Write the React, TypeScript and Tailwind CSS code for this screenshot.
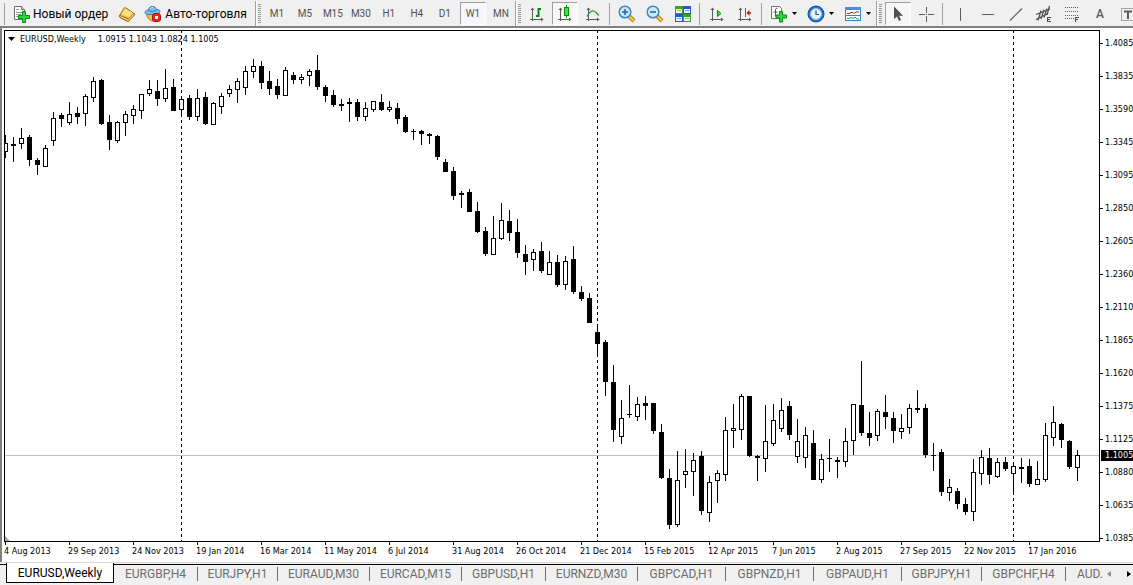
import type { ReactNode } from "react"
import clsx from "clsx"

// [high, body top, body bottom, low, rising] as rows of the chart window
type Candle = [number, number, number, number, 0 | 1]

const PLOT_TOP = 31
const STEP = 8

const candles: Candle[] = [
  [135, 143, 152, 158, 1], [137, 144, 146, 162, 0], [128, 138, 144, 149, 1], [135, 137, 160, 166, 0],
  [158, 160, 165, 175, 0], [145, 148, 167, 167, 1], [112, 118, 141, 146, 1], [113, 115, 119, 127, 0],
  [102, 114, 123, 125, 1], [107, 113, 117, 124, 0], [94, 96, 114, 126, 1], [77, 81, 98, 102, 1],
  [79, 80, 124, 125, 0], [115, 122, 140, 150, 0], [121, 122, 141, 143, 1], [111, 114, 123, 136, 1],
  [105, 109, 116, 124, 1], [94, 94, 111, 119, 1], [80, 89, 94, 96, 1], [80, 91, 99, 106, 0],
  [69, 88, 99, 102, 1], [79, 87, 111, 111, 0], [96, 99, 110, 115, 1], [95, 98, 117, 120, 0],
  [89, 98, 117, 121, 1], [92, 97, 124, 125, 0], [102, 103, 125, 125, 1], [93, 96, 107, 114, 1],
  [85, 89, 94, 97, 1], [78, 81, 90, 103, 1], [66, 71, 88, 95, 1], [59, 66, 72, 78, 1],
  [61, 66, 83, 89, 0], [71, 81, 89, 95, 0], [79, 86, 95, 99, 0], [67, 70, 96, 96, 1],
  [72, 75, 80, 84, 0], [74, 77, 80, 84, 1], [69, 71, 76, 86, 1], [55, 70, 87, 90, 0],
  [85, 87, 96, 102, 0], [90, 95, 105, 107, 0], [99, 104, 106, 111, 0], [98, 102, 104, 122, 0],
  [99, 102, 117, 121, 0], [102, 108, 117, 121, 1], [101, 101, 110, 112, 1], [94, 102, 110, 111, 0],
  [101, 107, 110, 112, 1], [103, 108, 119, 124, 0], [115, 117, 132, 133, 0], [129, 131, 132, 140, 0],
  [130, 131, 134, 145, 0], [133, 134, 136, 144, 0], [135, 136, 157, 160, 0], [159, 162, 172, 172, 0],
  [167, 171, 196, 200, 0], [191, 193, 195, 208, 0], [189, 192, 212, 212, 0], [202, 211, 232, 233, 0],
  [227, 231, 254, 256, 0], [216, 238, 255, 255, 1], [203, 220, 239, 240, 1], [210, 221, 233, 241, 0],
  [219, 232, 253, 258, 0], [245, 254, 262, 275, 0], [249, 252, 260, 271, 1], [242, 251, 271, 273, 0],
  [251, 262, 275, 275, 1], [255, 262, 285, 287, 0], [256, 261, 285, 290, 1], [246, 259, 292, 294, 0],
  [286, 292, 299, 301, 0], [293, 298, 323, 323, 0], [324, 332, 344, 356, 0], [340, 342, 382, 396, 0],
  [365, 382, 430, 442, 0], [400, 418, 437, 444, 1], [385, 414, 415, 418, 0], [397, 404, 417, 421, 1],
  [396, 403, 406, 420, 0], [403, 403, 431, 434, 0], [424, 432, 478, 479, 0], [469, 478, 525, 529, 0],
  [451, 480, 525, 527, 1], [449, 471, 475, 488, 1], [453, 460, 472, 496, 1], [451, 456, 511, 515, 0],
  [476, 482, 513, 522, 1], [470, 473, 481, 503, 1], [417, 430, 475, 481, 1], [404, 428, 431, 448, 1],
  [394, 396, 430, 440, 1], [396, 396, 456, 457, 0], [455, 456, 458, 481, 0], [405, 441, 459, 472, 1],
  [404, 420, 444, 446, 1], [398, 410, 429, 432, 1], [401, 406, 435, 440, 0], [419, 441, 457, 463, 1],
  [427, 435, 458, 468, 1], [430, 443, 480, 480, 0], [454, 459, 480, 483, 1], [439, 458, 459, 472, 0],
  [457, 460, 462, 478, 0], [428, 441, 462, 467, 1], [404, 404, 441, 455, 1], [361, 405, 433, 436, 0],
  [412, 433, 438, 446, 0], [409, 411, 436, 441, 1], [395, 412, 417, 429, 0], [412, 418, 431, 443, 0],
  [414, 428, 432, 439, 1], [404, 408, 428, 434, 1], [390, 408, 410, 413, 0], [404, 408, 455, 458, 0],
  [443, 455, 456, 471, 0], [449, 452, 492, 496, 0], [479, 487, 493, 501, 1], [488, 491, 504, 509, 0],
  [498, 504, 512, 515, 0], [459, 472, 512, 521, 1], [450, 457, 474, 485, 1], [448, 458, 475, 484, 0],
  [458, 462, 477, 478, 1], [457, 462, 469, 471, 0], [462, 466, 474, 495, 1], [458, 467, 469, 483, 0],
  [459, 466, 484, 487, 0], [461, 479, 485, 485, 1], [423, 435, 480, 482, 1], [406, 422, 438, 446, 1],
  [423, 424, 440, 448, 0], [440, 441, 467, 469, 0], [450, 455, 468, 481, 1],
]

// candles that open a new year
const yearStarts = [22, 74, 126]

const prices = [
  "1.4085", "1.3835", "1.3590", "1.3345", "1.3095", "1.2850", "1.2605", "1.2360",
  "1.2110", "1.1865", "1.1620", "1.1375", "1.1125", "1.0880", "1.0635", "1.0385",
]

const dates = [
  "4 Aug 2013", "29 Sep 2013", "24 Nov 2013", "19 Jan 2014", "16 Mar 2014", "11 May 2014",
  "6 Jul 2014", "31 Aug 2014", "26 Oct 2014", "21 Dec 2014", "15 Feb 2015", "12 Apr 2015",
  "7 Jun 2015", "2 Aug 2015", "27 Sep 2015", "22 Nov 2015", "17 Jan 2016",
]

const timeframes = ["M1", "M5", "M15", "M30", "H1", "H4", "D1", "W1", "MN"]

const tabs = [
  { name: "EURGBP,H4", width: "w-21" },
  { name: "EURJPY,H1", width: "w-20" },
  { name: "EURAUD,M30", width: "w-23" },
  { name: "EURCAD,M15", width: "w-23" },
  { name: "GBPUSD,H1", width: "w-21" },
  { name: "EURNZD,M30", width: "w-23" },
  { name: "GBPCAD,H1", width: "w-22" },
  { name: "GBPNZD,H1", width: "w-22" },
  { name: "GBPAUD,H1", width: "w-22" },
  { name: "GBPJPY,H1", width: "w-20" },
  { name: "GBPCHF,H4", width: "w-21" },
]

const PRESSED =
  "border border-t-[#a0a0a0] border-l-[#a0a0a0] border-r-white border-b-white bg-[#f7f7f7]"

function Icon({ size = 18, children }: { size?: number; children: ReactNode }) {
  return (
    <svg width={size} height={size} viewBox={`0 0 ${size} ${size}`} className="block shrink-0" aria-hidden="true">
      {children}
    </svg>
  )
}

function ToolButton({ label, active, children }: { label: string; active?: boolean; children: ReactNode }) {
  return (
    <button
      aria-label={label}
      title={label}
      className="flex h-full w-7 shrink-0 items-center justify-center"
    >
      <span className={clsx("flex h-[23px] w-[26px] items-center justify-center", active && PRESSED)}>
        {children}
      </span>
    </button>
  )
}

function MenuButton({ label, children }: { label: string; children: ReactNode }) {
  return (
    <button
      aria-label={label}
      title={label}
      className="flex h-full w-[37px] shrink-0 items-center justify-center gap-1"
    >
      {children}
      <svg width="5" height="3" viewBox="0 0 5 3" aria-hidden="true">
        <path d="M0 0h5L2.5 3z" fill="#000" />
      </svg>
    </button>
  )
}

function Separator() {
  return (
    <span className="flex w-1.5 shrink-0 justify-center">
      <span className="h-[22px] w-px bg-[#a0a0a0]" />
    </span>
  )
}

function SectionStart() {
  return (
    <span className="flex h-full w-2 shrink-0 items-center gap-px">
      <span className="h-full w-0.5 border-l border-l-[#a0a0a0] bg-white" />
      <svg width="3" height="20" viewBox="0 0 3 20" aria-hidden="true">
        <path d="M1.5 0v20" stroke="#9a9a9a" strokeWidth="3" strokeDasharray="1 1" />
      </svg>
    </span>
  )
}

function Axes() {
  return (
    <g stroke="#5c5c5c" fill="#5c5c5c">
      <path d="M4.5 3v13M2 14.5h13" fill="none" />
      <path d="M2.500 5 4.500 2.500 6.500 5zM13 12.500 15.500 14.500 13 16.500z" stroke="none" />
    </g>
  )
}

function NewOrderIcon() {
  return (
    <Icon>
      <path d="M1.500 1.500h7l3 3v10h-10z" fill="#fff" stroke="#707070" />
      <path d="M8.500 1.500v3h3" fill="#ddd" stroke="#707070" />
      <path d="M3 4.500h3M3 7.500h6M3 9.500h5M3 11.500h3" stroke="#9a9a9a" />
      <path d="M9.500 6.500h3v4h4v3h-4v4h-3v-4h-4v-3h4z" fill="#2fd63a" stroke="#0b8a17" />
    </Icon>
  )
}

function BookIcon() {
  return (
    <Icon>
      <path d="M1.500 10.500 6.500 2.500c3 1 6 3.500 9.500 6l-5.500 7z" fill="#f0bf3c" stroke="#a36a0c" />
      <path d="M3.500 9 7 3.500c2.500 1 5.500 3 8 5L11 12.500C8.500 11 6 9.500 3.500 9z" fill="#fbe088" />
      <path d="M1.500 10.500c-.3 1 0 1.700.8 2.200l8 4c.6-.8 5-5.500 6-6.700l-.3-1.500-5.500 5.500z" fill="#d4921c" stroke="#8f5a08" />
      <path d="m2.500 11.500 7.800 3.800 5.200-5.800" fill="none" stroke="#fff3c4" />
    </Icon>
  )
}

function AutoTradeIcon() {
  return (
    <Icon>
      <path d="M3 8c-1 3 2 8 6 8s7-3 6.500-7z" fill="#f1c232" stroke="#a87a10" />
      <path d="M1 7.500c0-1.500 2-2.500 3.500-2.500C5 2.500 6.500 1.500 8.500 1.500s3.500 1 4 3c2 0 3.500.8 3.500 2S13 9.500 8 9.500 1 9 1 7.500z" fill="#7cc0ea" stroke="#2878b0" />
      <path d="M4.500 5.500c2 1.300 6 1.300 8-.5" fill="none" stroke="#2878b0" />
      <path d="M6.500 3.500c.5-.8 1.500-1 2.500-1" fill="none" stroke="#d8f0ff" />
      <rect x="8.500" y="8.500" width="8" height="8" rx="2.500" fill="#e02a18" stroke="#a81408" />
      <rect x="11" y="11" width="3" height="3" fill="#fff" />
    </Icon>
  )
}

function MagnifierIcon({ plus }: { plus?: boolean }) {
  return (
    <Icon>
      <path d="m11 11 5 5" stroke="#a07810" strokeWidth="4" />
      <path d="m11 11 4.600 4.600" stroke="#f4d040" strokeWidth="2.400" />
      <circle cx="7" cy="7" r="5.800" fill="#cdeafa" stroke="#3a88c8" strokeWidth="1.500" />
      <path d="M4 7h6" stroke="#2f78b4" strokeWidth="1.800" />
      {plus && <path d="M7 4v6" stroke="#2f78b4" strokeWidth="1.800" />}
    </Icon>
  )
}

function TileIcon() {
  const cells = [
    { x: 1, y: 1, fill: "#3f9e1c" },
    { x: 9, y: 1, fill: "#2457c8" },
    { x: 1, y: 9, fill: "#2457c8" },
    { x: 9, y: 9, fill: "#3f9e1c" },
  ]
  return (
    <Icon>
      {cells.map((c) => (
        <g key={`${c.x}-${c.y}`} shapeRendering="crispEdges">
          <rect x={c.x} y={c.y} width="8" height="8" fill={c.fill} />
          <rect x={c.x + 1} y={c.y + 3} width="6" height="4" fill="#eef4ff" />
          <rect x={c.x + 2} y={c.y + 4} width="4" height="1" fill={c.fill} opacity=".6" />
        </g>
      ))}
    </Icon>
  )
}

function IndicatorIcon() {
  return (
    <Icon>
      <path d="M1.500 1.500h8l2 2v10h-10z" fill="#fff" stroke="#707070" />
      <path d="M7.500 3.500c-2-.5-2 1-2 2.500v5.500M3.500 7h4" fill="none" stroke="#555" />
      <path d="M9.500 6.500h3v3.500h4v3h-4v4h-3v-4h-3.500v-3h3.500z" fill="#2fd63a" stroke="#0b8a17" />
    </Icon>
  )
}

function ClockIcon() {
  return (
    <Icon>
      <circle cx="9" cy="9" r="8" fill="#2372cc" stroke="#174f98" />
      <circle cx="9" cy="9" r="5.500" fill="#e4f3ff" stroke="#8fc0f0" />
      <path d="M9 5.500V9.500h3" fill="none" stroke="#2a5078" strokeWidth="1.200" />
    </Icon>
  )
}

function TemplateIcon() {
  return (
    <Icon>
      <rect x="1.500" y="2.500" width="15" height="13" fill="#fff" stroke="#3d7dc4" />
      <path d="M1 3.500h16" stroke="#4a8fd8" strokeWidth="3" />
      <path d="M2 10.500h14" stroke="#3d7dc4" />
      <path d="M3 8.500h2l2-1h2l1 1 2-1.500h3" fill="none" stroke="#9a2a10" />
      <path d="M3 13.500h2l2-1 2 1 2-1.500 2 2h2" fill="none" stroke="#2f9a3a" />
    </Icon>
  )
}

function Toolbar() {
  return (
    <header
      role="toolbar"
      className="flex h-[26px] shrink-0 items-center overflow-hidden bg-[#f0f0f0] pt-px text-black"
    >
      <span className="ml-1 mr-2 h-[22px] w-px shrink-0 bg-[#a0a0a0]" />
      <button className="flex shrink-0 items-center gap-0.5 whitespace-nowrap text-xs">
        <NewOrderIcon />
        Новый ордер
      </button>
      <button aria-label="MetaEditor" className="ml-2.5 mr-2 shrink-0">
        <BookIcon />
      </button>
      <button className="mr-2 flex shrink-0 items-center gap-[3px] whitespace-nowrap text-xs">
        <AutoTradeIcon />
        Авто-торговля
      </button>

      <SectionStart />
      {timeframes.map((tf) => (
        <ToolButton key={tf} label={tf} active={tf === "W1"}>
          <span className="text-[10px] text-[#505050]">{tf}</span>
        </ToolButton>
      ))}

      <SectionStart />
      <ToolButton label="Bar Chart">
        <Icon>
          <Axes />
          <path d="M10.500 3v9M8 11h3M10 4h3" stroke="#0a8a14" strokeWidth="2" />
        </Icon>
      </ToolButton>
      <ToolButton label="Candlesticks" active>
        <Icon>
          <Axes />
          <path d="M10.500 0v13" stroke="#0a8a14" />
          <rect x="8.500" y="2.500" width="4" height="8" fill="#3fe04c" stroke="#0a8a14" />
        </Icon>
      </ToolButton>
      <ToolButton label="Line Chart">
        <Icon>
          <Axes />
          <path d="M3 11.500c3-6 6-7 9-4l3 3" fill="none" stroke="#2f9a3a" strokeWidth="1.300" />
        </Icon>
      </ToolButton>
      <Separator />
      <ToolButton label="Zoom In">
        <MagnifierIcon plus />
      </ToolButton>
      <ToolButton label="Zoom Out">
        <MagnifierIcon />
      </ToolButton>
      <ToolButton label="Tile Windows">
        <TileIcon />
      </ToolButton>
      <Separator />
      <ToolButton label="Auto Scroll">
        <Icon>
          <Axes />
          <path d="m9.500 5.500 3.500 3-3.500 3z" fill="#3fe04c" stroke="#0a8a14" />
        </Icon>
      </ToolButton>
      <ToolButton label="Chart Shift">
        <Icon>
          <Axes />
          <path d="M9.500 3v9" stroke="#2a70a8" />
          <path d="M11 8h4" stroke="#a82a10" strokeWidth="1.500" />
          <path d="m10.500 8 3-3v6z" fill="#a82a10" />
        </Icon>
      </ToolButton>
      <Separator />
      <MenuButton label="Indicators">
        <IndicatorIcon />
      </MenuButton>
      <MenuButton label="Periods">
        <ClockIcon />
      </MenuButton>
      <MenuButton label="Templates">
        <TemplateIcon />
      </MenuButton>

      <SectionStart />
      <ToolButton label="Cursor" active>
        <Icon>
          <path d="M5 1.500v12.500l3-2.500 2 4.500 2-1-2-4.200h4z" fill="#4d4d4d" />
        </Icon>
      </ToolButton>
      <ToolButton label="Crosshair">
        <Icon>
          <path d="M9.500 2v6M9.500 11v6M2 9.500h6M11 9.500h6M9 9.500h1" stroke="#5c5c5c" />
        </Icon>
      </ToolButton>
      <Separator />
      <ToolButton label="Vertical Line">
        <Icon>
          <path d="M9.500 3v13" stroke="#5c5c5c" />
        </Icon>
      </ToolButton>
      <ToolButton label="Horizontal Line">
        <Icon>
          <path d="M3 9.500h12" stroke="#5c5c5c" />
        </Icon>
      </ToolButton>
      <ToolButton label="Trendline">
        <Icon>
          <path d="M3 15.500 15 3.500" stroke="#5c5c5c" strokeWidth="1.200" />
        </Icon>
      </ToolButton>
      <ToolButton label="Equidistant Channel">
        <Icon>
          <path d="M1 9.500 15 4M1 14.500 13 8.500M6 5.500l-3 10M9 4.500l-3 9.500M12 3.500l-3 9M14.500 1l-2.500 9" stroke="#4d4d4d" strokeWidth="1.200" />
          <path d="M12.500 12v5M12 12.500h4M12 14.500h3M12 16.500h4" stroke="#4d4d4d" />
        </Icon>
      </ToolButton>
      <ToolButton label="Fibonacci Retracement">
        <Icon>
          <path d="M2 2.500h13M2 6.500h13M2 10.500h13M2 13.500h9" stroke="#5c5c5c" strokeDasharray="1 1" />
          <path d="M12.500 12v5M12 12.500h4M12 14.500h3" stroke="#4d4d4d" />
        </Icon>
      </ToolButton>
      <ToolButton label="Text">
        <span className="text-xs font-medium text-[#5c5c5c]">A</span>
      </ToolButton>
      <ToolButton label="Text Label">
        <Icon>
          <rect x="2.500" y="3.500" width="13" height="12" fill="none" stroke="#5c5c5c" strokeDasharray="1 1" />
          <path d="M5 6.500h8M9 6v8" stroke="#5c5c5c" strokeWidth="2" />
        </Icon>
      </ToolButton>
    </header>
  )
}

function CandleShape({ index, candle }: { index: number; candle: Candle }) {
  const [high, top, bottom, low, rising] = candle
  const x = index * STEP
  return (
    <g>
      <rect x={x} y={high - PLOT_TOP} width={1} height={low - high} />
      <rect x={x - 2} y={top - PLOT_TOP} width={5} height={bottom - top} />
      {rising === 1 && (
        <rect x={x - 1} y={top - PLOT_TOP + 1} width={3} height={bottom - top - 2} fill="#fff" />
      )}
    </g>
  )
}

function Plot() {
  return (
    <div className="relative min-h-0 flex-1 overflow-hidden border border-black">
      <svg className="absolute inset-0 h-full w-full" shapeRendering="crispEdges" role="img" aria-label="EURUSD,Weekly">
        <path d="M0 424.5h4000" stroke="#c0c0c0" />
        {yearStarts.map((i) => (
          <path key={i} d={`M${i * STEP + 0.5} -1v4000`} stroke="#000" strokeDasharray="3 3" />
        ))}
        {candles.map((candle, i) => (
          <CandleShape key={i} index={i} candle={candle} />
        ))}
      </svg>
      <p className="absolute left-[3px] top-0.5 flex items-center whitespace-nowrap leading-3">
        <svg width="7" height="4" viewBox="0 0 7 4" className="mr-[5px]" aria-hidden="true">
          <path d="M0 0h7L3.500 4z" />
        </svg>
        <span className="mr-3">EURUSD,Weekly</span>
        <span>1.0915 1.1043 1.0824 1.1005</span>
      </p>
      <svg width="5" height="5" className="absolute bottom-0 left-0" aria-hidden="true">
        <path d="M0 0v5h5z" fill="#a8a8a8" />
      </svg>
    </div>
  )
}

function Chart() {
  return (
    <main className="flex min-h-0 flex-1 border-l-2 border-t-2 border-[#808080] bg-white pl-0.5 font-['DejaVu_Sans_Condensed','DejaVu_Sans',sans-serif] text-[9px] text-black">
      <div className="flex min-w-0 flex-1 flex-col pt-0.5">
        <Plot />
        <div className="flex h-5 shrink-0 overflow-hidden">
          {dates.map((date) => (
            <div key={date} className="w-16 shrink-0">
              <div className="ml-px h-[3px] w-px bg-black" />
              <div className="whitespace-nowrap leading-3">{date}</div>
            </div>
          ))}
        </div>
      </div>
      <div className="relative w-[33px] shrink-0 overflow-hidden pt-2.5">
        {prices.map((price) => (
          <div key={price} className="flex h-[33px] items-start leading-[11px]">
            <span className="mr-0.5 mt-[5px] h-px w-[3px] shrink-0 bg-black" />
            {price}
          </div>
        ))}
        <div className="absolute left-px right-0 top-[422px] bg-black pl-1 leading-[11px] text-white">1.1005</div>
      </div>
    </main>
  )
}

function ChartTabs() {
  return (
    <footer className="flex h-[23px] shrink-0 border-t border-[#d8d8d8] bg-[#f0f0f0] text-xs text-[#6d6d6d]">
      <div className="h-0.5 w-1.5 shrink-0 border-b border-black bg-white" />
      <nav role="tablist" className="flex min-w-0 flex-1 overflow-hidden">
        <button
          role="tab"
          aria-selected="true"
          className="h-5 w-27 shrink-0 border-x border-b border-black bg-white pt-px leading-[18px] text-black"
        >
          EURUSD,Weekly
        </button>
        <div className="mt-px flex min-w-0 flex-1 items-center overflow-hidden border-t border-black pb-0.5">
          {tabs.map((tab) => (
            <button
              key={tab.name}
              role="tab"
              aria-selected="false"
              className={clsx("flex shrink-0 items-center justify-center leading-[18px]", tab.width)}
            >
              <span className="flex-1 text-center">{tab.name}</span>
              <span className="h-3.5 w-px bg-[#6d6d6d]" />
            </button>
          ))}
          <button role="tab" aria-selected="false" className="ml-[11px] shrink-0 leading-[18px]">
            AUD.
          </button>
          <div className="ml-auto flex items-center gap-4 pr-0.5">
            <button aria-label="Scroll tabs left">
              <svg width="4" height="6" viewBox="0 0 4 6">
                <path d="M4 0v6L0 3z" fill="#909090" />
              </svg>
            </button>
            <button aria-label="Scroll tabs right">
              <svg width="4" height="6" viewBox="0 0 4 6">
                <path d="M0 0v6l4-3z" fill="#000" />
              </svg>
            </button>
          </div>
        </div>
      </nav>
    </footer>
  )
}

export default function App() {
  return (
    <div className="flex h-screen flex-col overflow-hidden bg-white font-[Roboto,'Noto_Sans',sans-serif]">
      <Toolbar />
      <Chart />
      <ChartTabs />
    </div>
  )
}
